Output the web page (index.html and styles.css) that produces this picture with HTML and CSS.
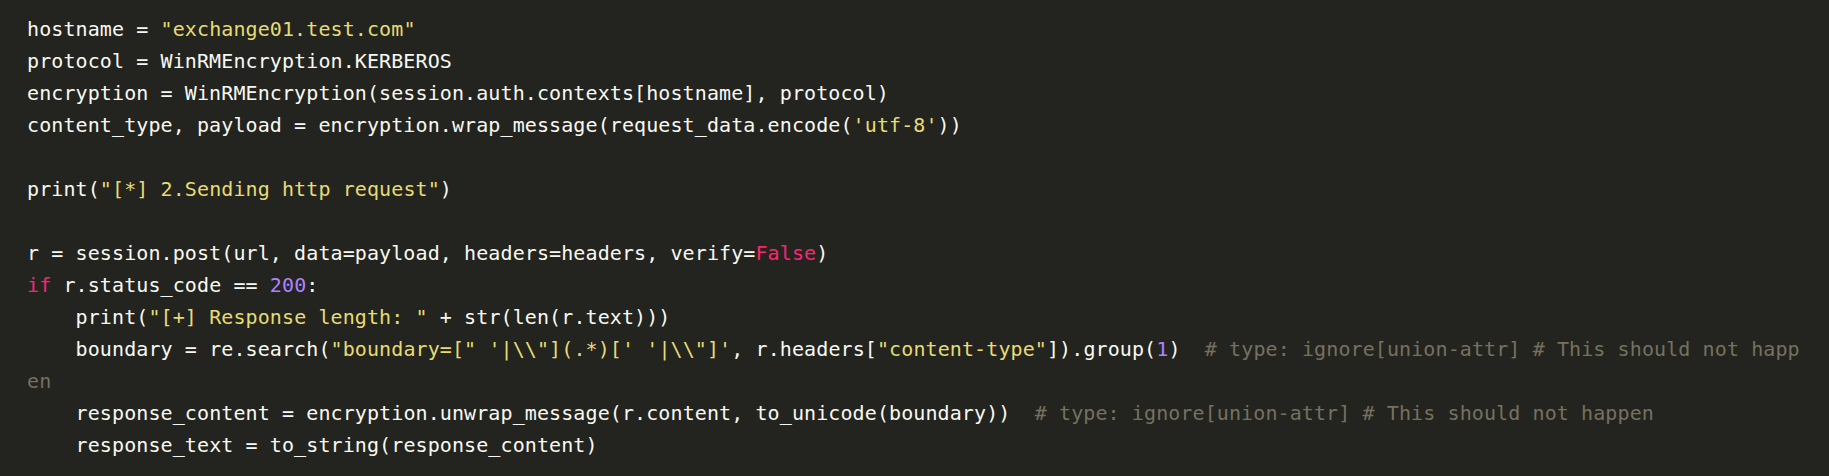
FILE: index.html
```html
<!DOCTYPE html>
<html lang="en">
<head>
<meta charset="utf-8">
<title>Code</title>
<link rel="stylesheet" href="styles.css">
</head>
<body>
<pre class="code"><code>hostname = <span class="str">"exchange01.test.com"</span>
protocol = WinRMEncryption.KERBEROS
encryption = WinRMEncryption(session.auth.contexts[hostname], protocol)
content_type, payload = encryption.wrap_message(request_data.encode(<span class="str">'utf-8'</span>))

print(<span class="str">"[*] 2.Sending http request"</span>)

r = session.post(url, data=payload, headers=headers, verify=<span class="kw">False</span>)
<span class="kw">if</span> r.status_code == <span class="num">200</span>:
    print(<span class="str">"[+] Response length: "</span> + str(len(r.text)))
    boundary = re.search(<span class="str">"boundary=["</span> <span class="str">'|\\"](.*)['</span> <span class="str">'|\\"]'</span>, r.headers[<span class="str">"content-type"</span>]).group(<span class="num">1</span>)  <span class="cm"># type: ignore[union-attr] # This should not happen</span>
    response_content = encryption.unwrap_message(r.content, to_unicode(boundary))  <span class="cm"># type: ignore[union-attr] # This should not happen</span>
    response_text = to_string(response_content)</code></pre>
</body>
</html>
```
FILE: styles.css
```css
html, body {
  margin: 0;
  padding: 0;
  background: #23241f;
}
.code {
  margin: 0;
  padding: 13px 0 0 27px;
  width: 1778px;
  font-family: "DejaVu Sans Mono", "Liberation Mono", monospace;
  font-size: 20px;
  letter-spacing: 0.1px;
  line-height: 32px;
  color: #f8f8f2;
  white-space: pre-wrap;
  word-break: break-all;
  background: #23241f;
}
.code code {
  font: inherit;
}
.str { color: #e6db74; }
.kw { color: #f92672; }
.num { color: #ae81ff; }
.cm { color: #75715e; }
```
